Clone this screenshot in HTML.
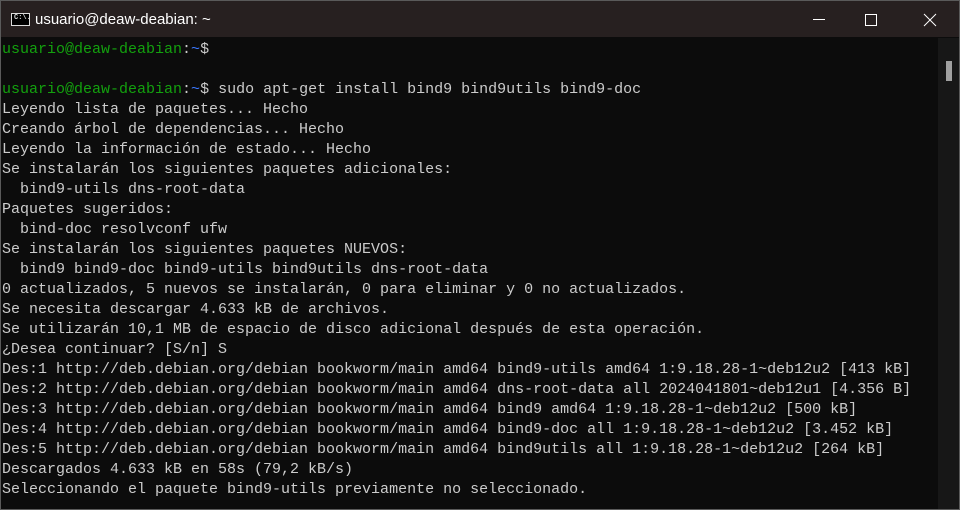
<!DOCTYPE html>
<html><head><meta charset="utf-8"><style>
html,body{margin:0;padding:0;width:960px;height:510px;overflow:hidden;background:#0c0c0c}
#win{position:absolute;left:0;top:0;width:958px;height:508px;border:1px solid #5a5a5a;background:#0c0c0c}
#title{position:absolute;left:0;top:0;width:958px;height:36px;background:#272020}
#title .t{position:absolute;left:34px;top:10px;color:#fff;font:15px "Liberation Sans",sans-serif}
#icon{position:absolute;left:10px;top:12px;width:19px;height:13px;border:1px solid #ddd;background:#000;box-sizing:border-box}
#icon span{position:absolute;left:2px;top:0px;color:#ddd;font:bold 7px "Liberation Mono",monospace}
.ctl{position:absolute;top:0;width:46px;height:36px}
#term{position:absolute;left:1px;top:39px;color:#cccccc;font:15px/20px "Liberation Mono","DejaVu Sans Mono",monospace;white-space:pre;letter-spacing:0}
.g{color:#13a10e}.b{color:#3b78ff}
#sb{position:absolute;left:937px;top:37px;width:21px;height:471px;background:#171717}
#thumb{position:absolute;left:8px;top:23px;width:6px;height:20px;background:#a0a0a0}
</style></head><body><div id="win">
<div id="title"><div id="icon"><span>C:\.</span></div><div class="t">usuario@deaw-deabian: ~</div>
<svg class="ctl" style="left:786px" viewBox="0 0 46 36"><line x1="26" y1="18.5" x2="38" y2="18.5" stroke="#fff" stroke-width="1"/></svg>
<svg class="ctl" style="left:846px" viewBox="0 0 46 36"><rect x="18.5" y="13.5" width="11" height="11" fill="none" stroke="#fff" stroke-width="1"/></svg>
<svg class="ctl" style="left:904px" viewBox="0 0 46 36"><path d="M19 13L31 25M31 13L19 25" stroke="#fff" stroke-width="1"/></svg>
</div>
<div id="term"><span class="g">usuario@deaw-deabian</span>:<span class="b">~</span>$

<span class="g">usuario@deaw-deabian</span>:<span class="b">~</span>$ sudo apt-get install bind9 bind9utils bind9-doc
Leyendo lista de paquetes... Hecho
Creando árbol de dependencias... Hecho
Leyendo la información de estado... Hecho
Se instalarán los siguientes paquetes adicionales:
  bind9-utils dns-root-data
Paquetes sugeridos:
  bind-doc resolvconf ufw
Se instalarán los siguientes paquetes NUEVOS:
  bind9 bind9-doc bind9-utils bind9utils dns-root-data
0 actualizados, 5 nuevos se instalarán, 0 para eliminar y 0 no actualizados.
Se necesita descargar 4.633 kB de archivos.
Se utilizarán 10,1 MB de espacio de disco adicional después de esta operación.
¿Desea continuar? [S/n] S
Des:1 http://deb.debian.org/debian bookworm/main amd64 bind9-utils amd64 1:9.18.28-1~deb12u2 [413 kB]
Des:2 http://deb.debian.org/debian bookworm/main amd64 dns-root-data all 2024041801~deb12u1 [4.356 B]
Des:3 http://deb.debian.org/debian bookworm/main amd64 bind9 amd64 1:9.18.28-1~deb12u2 [500 kB]
Des:4 http://deb.debian.org/debian bookworm/main amd64 bind9-doc all 1:9.18.28-1~deb12u2 [3.452 kB]
Des:5 http://deb.debian.org/debian bookworm/main amd64 bind9utils all 1:9.18.28-1~deb12u2 [264 kB]
Descargados 4.633 kB en 58s (79,2 kB/s)
Seleccionando el paquete bind9-utils previamente no seleccionado.</div>
<div id="sb"><div id="thumb"></div></div>
</div></body></html>
